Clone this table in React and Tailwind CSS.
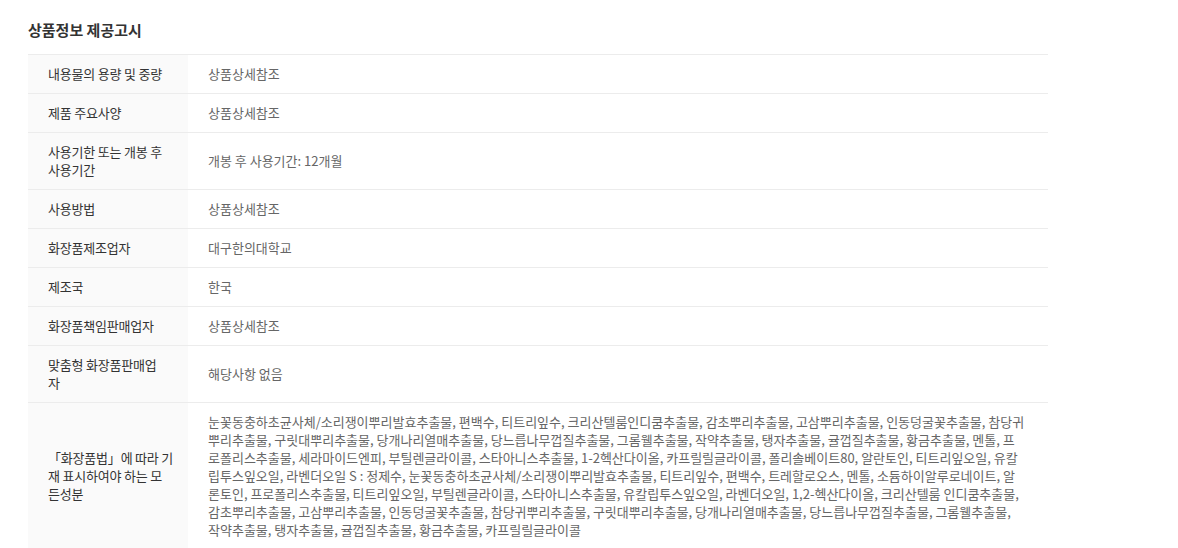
import React from 'react';

const rows = [
  { label: ['내용물의 용량 및 중량'], value: ['상품상세참조'] },
  { label: ['제품 주요사양'], value: ['상품상세참조'] },
  { label: ['사용기한 또는 개봉 후', '사용기간'], value: ['개봉 후 사용기간: 12개월'] },
  { label: ['사용방법'], value: ['상품상세참조'] },
  { label: ['화장품제조업자'], value: ['대구한의대학교'] },
  { label: ['제조국'], value: ['한국'] },
  { label: ['화장품책임판매업자'], value: ['상품상세참조'] },
  { label: ['맞춤형 화장품판매업', '자'], value: ['해당사항 없음'] },
  {
    label: ['「화장품법」에 따라 기', '재 표시하여야 하는 모', '든성분'],
    value: [
      '눈꽃동충하초균사체/소리쟁이뿌리발효추출물, 편백수, 티트리잎수, 크리산텔룸인디쿰추출물, 감초뿌리추출물, 고삼뿌리추출물, 인동덩굴꽃추출물, 참당귀',
      '뿌리추출물, 구릿대뿌리추출물, 당개나리열매추출물, 당느릅나무껍질추출물, 그롬웰추출물, 작약추출물, 탱자추출물, 귤껍질추출물, 황금추출물, 멘톨, 프',
      '로폴리스추출물, 세라마이드엔피, 부틸렌글라이콜, 스타아니스추출물, 1-2헥산다이올, 카프릴릴글라이콜, 폴리솔베이트80, 알란토인, 티트리잎오일, 유칼',
      '립투스잎오일, 라벤더오일 S : 정제수, 눈꽃동충하초균사체/소리쟁이뿌리발효추출물, 티트리잎수, 편백수, 트레할로오스, 멘톨, 소듐하이알루로네이트, 알',
      '론토인, 프로폴리스추출물, 티트리잎오일, 부틸렌글라이콜, 스타아니스추출물, 유칼립투스잎오일, 라벤더오일, 1,2-헥산다이올, 크리산텔룸 인디쿰추출물,',
      '감초뿌리추출물, 고삼뿌리추출물, 인동덩굴꽃추출물, 참당귀뿌리추출물, 구릿대뿌리추출물, 당개나리열매추출물, 당느릅나무껍질추출물, 그롬웰추출물,',
      '작약추출물, 탱자추출물, 귤껍질추출물, 황금추출물, 카프릴릴글라이콜',
    ],
  },
];

const App = () => {
  return (
    <div
      className="min-h-screen bg-white pl-[28px] pt-[20px]"
      style={{ fontFamily: '"Noto Sans CJK KR", "Noto Sans", sans-serif' }}
    >
      {/* 제목 */}
      <h2 className="mb-[14px] text-[15px] font-bold leading-[20px] text-[#333]">상품정보 제공고시</h2>

      {/* 정보 테이블 */}
      <div className="w-[1020px] border-b border-[#ececec]">
        {rows.map((row, i) => (
          <div key={i} className="flex border-t border-[#ececec] text-[13px] leading-[18px]">
            <div className="flex w-[160px] shrink-0 items-center bg-[#fafafa] px-[20px] py-[10px] text-[#333]">
              <div>
                {row.label.map((l, j) => (
                  <div key={j} className="whitespace-nowrap tracking-[-0.2px]">{l}</div>
                ))}
              </div>
            </div>
            <div className="flex flex-1 items-center px-[20px] py-[10px] text-[#666]">
              <div>
                {row.value.map((v, j) => (
                  <div key={j} className="whitespace-nowrap">{v}</div>
                ))}
              </div>
            </div>
          </div>
        ))}
      </div>
    </div>
  );
};

export default App;
